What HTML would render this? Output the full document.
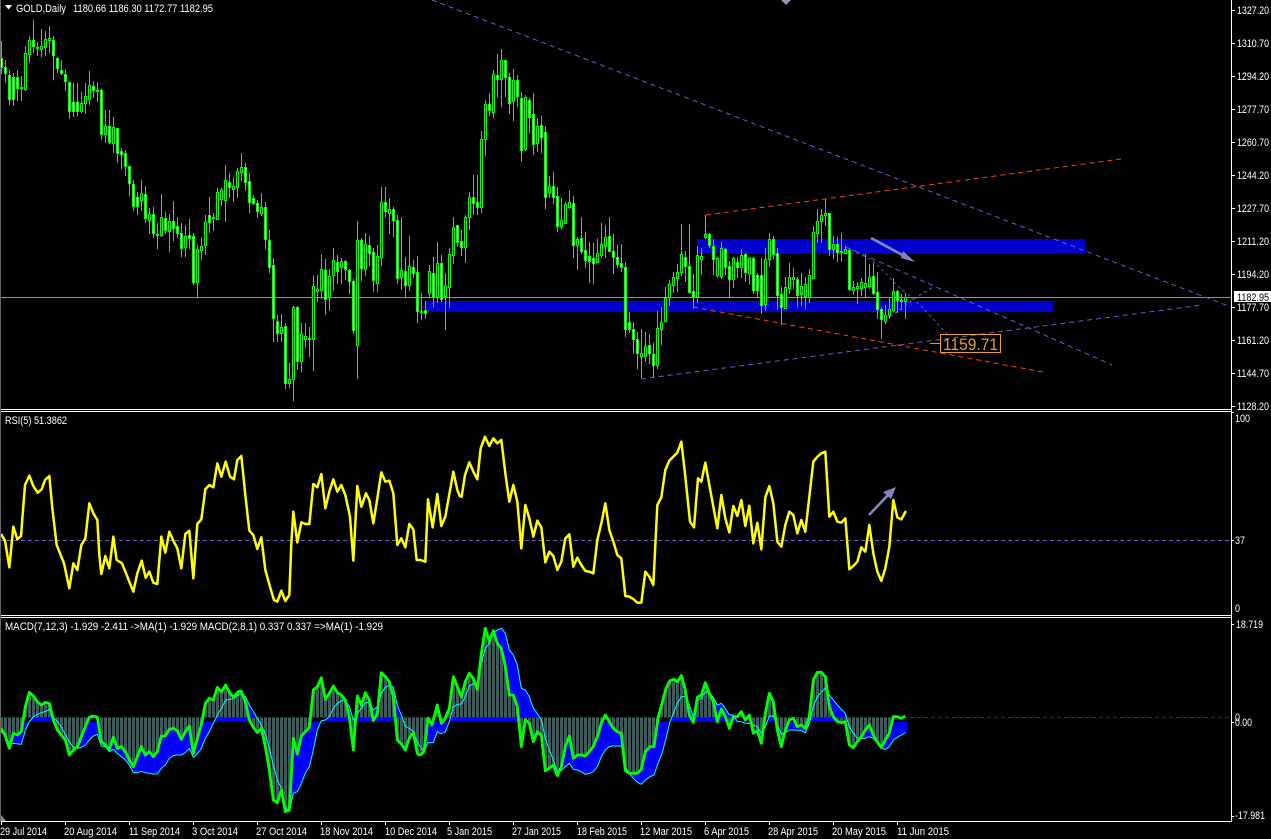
<!DOCTYPE html>
<html><head><meta charset="utf-8"><title>GOLD,Daily</title>
<style>
html,body{margin:0;padding:0;background:#000;width:1271px;height:839px;overflow:hidden}
svg{display:block}
text{font-family:"Liberation Sans",sans-serif;font-size:11px;fill:#fff}
</style></head><body>
<svg width="1271" height="839" viewBox="0 0 1271 839" xmlns="http://www.w3.org/2000/svg">
<defs>
<pattern id="bars" patternUnits="userSpaceOnUse" x="0" y="0" width="12" height="30">
<rect width="12" height="30" fill="#000"/><rect x="0" width="9" height="30" fill="#3c5a5a"/>
</pattern>
</defs>
<rect width="1271" height="839" fill="#000"/>

<!-- main chart -->
<rect x="697" y="239" width="388" height="15" fill="#0000cd"/>
<rect x="426" y="301" width="627" height="11" fill="#0000cd"/>
<rect x="0" y="297" width="1231" height="1" fill="#8e9494"/>

<g shape-rendering="crispEdges">
<path fill="none" stroke="#00ff00" d="M1.5 41V74M5.5 60V83M9.5 70V105M13.5 73V106M17.5 70V101M21.5 76V101M25.5 46V91M29.5 36V63M33.5 20V53M37.5 42V56M41.5 29V57M45.5 31V56M49.5 26V53M53.5 36V80M57.5 57V73M61.5 60V75M65.5 69V91M69.5 82V119M73.5 83V117M77.5 83V116M81.5 92V113M85.5 83V114M89.5 71V105M93.5 81V98M97.5 82V102M101.5 89V140M105.5 110V143M109.5 110V144M113.5 117V153M117.5 128V163M121.5 148V169M125.5 150V176M129.5 166V196M133.5 180V211M137.5 192V215M141.5 180V211M145.5 186V223M149.5 208V234M153.5 207V238M157.5 223V249M161.5 194V237M165.5 212V234M169.5 214V252M173.5 201V241M177.5 217V238M181.5 223V257M185.5 225V257M189.5 219V249M193.5 233V285M197.5 245V298M201.5 237V260M205.5 215V255M209.5 197V233M213.5 213V231M217.5 188V220M221.5 188V206M225.5 165V222M229.5 173V198M233.5 177V202M237.5 168V198M241.5 153V181M245.5 163V191M249.5 173V213M253.5 195V205M257.5 200V218M261.5 193V216M265.5 202V249M269.5 230V273M273.5 258V342M277.5 315V342M281.5 314V342M285.5 323V389M289.5 363V388M293.5 306V401M297.5 306V370M301.5 323V372M305.5 323V348M309.5 327V357M313.5 276V371M317.5 275V302M321.5 254V299M325.5 259V315M329.5 269V311M333.5 248V291M337.5 255V284M341.5 258V284M345.5 260V280M349.5 269V294M353.5 279V334M357.5 221V379M361.5 238V281M365.5 233V276M369.5 236V266M373.5 248V292M377.5 245V292M381.5 187V266M385.5 187V217M389.5 198V234M393.5 207V237M397.5 215V284M401.5 217V290M405.5 257V298M409.5 236V291M413.5 260V278M417.5 256V323M421.5 293V320M425.5 301V319M429.5 265V298M433.5 257V307M437.5 242V303M441.5 255V302M445.5 273V330M449.5 248V308M453.5 217V264M457.5 225V247M461.5 230V256M465.5 215V263M469.5 192V230M473.5 175V215M477.5 175V215M481.5 131V213M485.5 100V156M489.5 93V116M493.5 70V118M497.5 54V97M501.5 49V107M505.5 60V97M509.5 73V114M513.5 69V121M517.5 75V107M521.5 92V162M525.5 95V151M529.5 98V133M533.5 93V155M537.5 118V152M541.5 116V153M545.5 126V209M549.5 176V198M553.5 172V204M557.5 187V232M561.5 198V229M565.5 202V224M569.5 190V209M573.5 196V258M577.5 237V270M581.5 217V254M585.5 232V268M589.5 242V283M593.5 243V284M597.5 239V263M601.5 223V258M605.5 225V258M609.5 217V252M613.5 234V274M617.5 245V268M621.5 244V272M625.5 262V337M629.5 312V333M633.5 322V354M637.5 332V369M641.5 329V378M645.5 332V362M649.5 334V364M653.5 343V378M657.5 311V369M661.5 307V345M665.5 287V322M669.5 280V306M673.5 272V293M677.5 264V292M681.5 224V276M685.5 251V282M689.5 224V293M693.5 274V309M697.5 246V303M701.5 248V275M705.5 215V239M709.5 233V248M713.5 239V275M717.5 257V278M721.5 242V279M725.5 248V275M729.5 261V297M733.5 257V288M737.5 257V278M741.5 249V278M745.5 253V282M749.5 257V284M753.5 257V294M757.5 273V298M761.5 258V314M765.5 248V311M769.5 233V267M773.5 236V259M777.5 248V310M781.5 287V325M785.5 277V309M789.5 263V294M793.5 268V289M797.5 277V307M801.5 273V306M805.5 277V309M809.5 269V303M813.5 226V279M817.5 209V243M821.5 209V243M825.5 199V226M829.5 213V256M833.5 236V259M837.5 237V262M841.5 233V262M845.5 246V254M849.5 248V291M853.5 281V295M857.5 282V304M861.5 278V296M865.5 254V297M869.5 264V289M873.5 263V295M877.5 272V319M881.5 307V339M885.5 305V324M889.5 297V319M893.5 278V312M897.5 290V313M901.5 294V310M905.5 293V319"/>
<path fill="#fff" stroke="#00ff00" d="M.5 58.5h2V67.5h-2zM4.5 67.5h2V73.5h-2zM8.5 75.5h2V99.5h-2zM12.5 77.5h2V99.5h-2zM16.5 77.5h2V88.5h-2zM32.5 40.5h2V46.5h-2zM52.5 40.5h2V55.5h-2zM56.5 58.5h2V68.5h-2zM60.5 70.5h2V73.5h-2zM64.5 74.5h2V81.5h-2zM68.5 82.5h2V111.5h-2zM72.5 102.5h2V111.5h-2zM76.5 102.5h2V111.5h-2zM92.5 86.5h2V90.5h-2zM100.5 90.5h2V134.5h-2zM108.5 126.5h2V142.5h-2zM116.5 128.5h2V153.5h-2zM120.5 151.5h2V154.5h-2zM124.5 153.5h2V166.5h-2zM128.5 166.5h2V183.5h-2zM132.5 184.5h2V206.5h-2zM136.5 197.5h2V206.5h-2zM144.5 194.5h2V218.5h-2zM152.5 214.5h2V233.5h-2zM164.5 218.5h2V230.5h-2zM172.5 221.5h2V228.5h-2zM176.5 226.5h2V233.5h-2zM180.5 233.5h2V248.5h-2zM188.5 235.5h2V238.5h-2zM192.5 236.5h2V282.5h-2zM208.5 215.5h2V222.5h-2zM228.5 182.5h2V187.5h-2zM244.5 167.5h2V182.5h-2zM248.5 181.5h2V202.5h-2zM252.5 198.5h2V203.5h-2zM256.5 203.5h2V211.5h-2zM264.5 207.5h2V239.5h-2zM268.5 240.5h2V267.5h-2zM272.5 265.5h2V318.5h-2zM276.5 321.5h2V333.5h-2zM284.5 326.5h2V383.5h-2zM296.5 307.5h2V361.5h-2zM324.5 270.5h2V299.5h-2zM336.5 262.5h2V271.5h-2zM344.5 261.5h2V269.5h-2zM348.5 270.5h2V281.5h-2zM352.5 281.5h2V330.5h-2zM360.5 240.5h2V268.5h-2zM368.5 245.5h2V253.5h-2zM372.5 252.5h2V280.5h-2zM384.5 202.5h2V211.5h-2zM392.5 209.5h2V220.5h-2zM396.5 220.5h2V278.5h-2zM404.5 271.5h2V285.5h-2zM412.5 267.5h2V273.5h-2zM416.5 272.5h2V311.5h-2zM424.5 310.5h2V313.5h-2zM432.5 273.5h2V297.5h-2zM440.5 263.5h2V299.5h-2zM456.5 225.5h2V242.5h-2zM460.5 241.5h2V247.5h-2zM472.5 197.5h2V203.5h-2zM476.5 202.5h2V207.5h-2zM488.5 104.5h2V110.5h-2zM496.5 75.5h2V79.5h-2zM504.5 60.5h2V77.5h-2zM508.5 77.5h2V103.5h-2zM516.5 80.5h2V96.5h-2zM520.5 98.5h2V150.5h-2zM528.5 100.5h2V117.5h-2zM532.5 114.5h2V144.5h-2zM540.5 125.5h2V137.5h-2zM544.5 132.5h2V197.5h-2zM552.5 186.5h2V197.5h-2zM556.5 196.5h2V226.5h-2zM572.5 203.5h2V245.5h-2zM580.5 238.5h2V251.5h-2zM584.5 250.5h2V260.5h-2zM588.5 256.5h2V261.5h-2zM592.5 258.5h2V263.5h-2zM608.5 236.5h2V251.5h-2zM612.5 251.5h2V257.5h-2zM616.5 257.5h2V264.5h-2zM620.5 263.5h2V267.5h-2zM624.5 267.5h2V329.5h-2zM628.5 322.5h2V329.5h-2zM632.5 329.5h2V339.5h-2zM636.5 339.5h2V353.5h-2zM648.5 345.5h2V353.5h-2zM652.5 354.5h2V365.5h-2zM684.5 257.5h2V266.5h-2zM688.5 266.5h2V292.5h-2zM692.5 291.5h2V297.5h-2zM708.5 234.5h2V245.5h-2zM712.5 246.5h2V259.5h-2zM724.5 249.5h2V267.5h-2zM728.5 266.5h2V279.5h-2zM736.5 262.5h2V267.5h-2zM744.5 254.5h2V272.5h-2zM752.5 258.5h2V290.5h-2zM756.5 275.5h2V290.5h-2zM760.5 275.5h2V305.5h-2zM772.5 239.5h2V254.5h-2zM776.5 253.5h2V295.5h-2zM780.5 294.5h2V307.5h-2zM796.5 279.5h2V295.5h-2zM828.5 213.5h2V249.5h-2zM836.5 244.5h2V252.5h-2zM848.5 250.5h2V289.5h-2zM872.5 276.5h2V293.5h-2zM876.5 292.5h2V309.5h-2zM880.5 309.5h2V319.5h-2zM896.5 291.5h2V300.5h-2z"/>
<path fill="#000" stroke="#00ff00" d="M20.5 87.5h2V88.5h-2zM24.5 53.5h2V89.5h-2zM28.5 40.5h2V54.5h-2zM36.5 47.5h2V48.5h-2zM40.5 46.5h2V49.5h-2zM44.5 39.5h2V47.5h-2zM48.5 38.5h2V40.5h-2zM80.5 103.5h2V111.5h-2zM84.5 96.5h2V103.5h-2zM88.5 85.5h2V99.5h-2zM96.5 90.5h2V91.5h-2zM104.5 126.5h2V134.5h-2zM112.5 127.5h2V143.5h-2zM140.5 193.5h2V200.5h-2zM148.5 214.5h2V220.5h-2zM156.5 234.5h2V235.5h-2zM160.5 217.5h2V235.5h-2zM168.5 221.5h2V231.5h-2zM184.5 236.5h2V247.5h-2zM196.5 249.5h2V282.5h-2zM200.5 246.5h2V250.5h-2zM204.5 222.5h2V245.5h-2zM212.5 217.5h2V218.5h-2zM216.5 192.5h2V219.5h-2zM220.5 190.5h2V199.5h-2zM224.5 180.5h2V200.5h-2zM232.5 186.5h2V189.5h-2zM236.5 171.5h2V187.5h-2zM240.5 167.5h2V172.5h-2zM260.5 207.5h2V213.5h-2zM280.5 327.5h2V333.5h-2zM288.5 379.5h2V383.5h-2zM292.5 307.5h2V379.5h-2zM300.5 334.5h2V361.5h-2zM304.5 336.5h2V339.5h-2zM308.5 338.5h2V339.5h-2zM312.5 286.5h2V339.5h-2zM316.5 289.5h2V291.5h-2zM320.5 269.5h2V290.5h-2zM328.5 276.5h2V297.5h-2zM332.5 260.5h2V275.5h-2zM340.5 261.5h2V267.5h-2zM356.5 240.5h2V345.5h-2zM364.5 244.5h2V269.5h-2zM376.5 256.5h2V283.5h-2zM380.5 202.5h2V257.5h-2zM388.5 209.5h2V213.5h-2zM400.5 270.5h2V277.5h-2zM408.5 266.5h2V285.5h-2zM420.5 311.5h2V312.5h-2zM428.5 271.5h2V293.5h-2zM436.5 263.5h2V297.5h-2zM444.5 286.5h2V296.5h-2zM448.5 254.5h2V287.5h-2zM452.5 227.5h2V255.5h-2zM464.5 217.5h2V247.5h-2zM468.5 197.5h2V217.5h-2zM480.5 139.5h2V207.5h-2zM484.5 104.5h2V139.5h-2zM492.5 74.5h2V112.5h-2zM500.5 60.5h2V79.5h-2zM512.5 80.5h2V101.5h-2zM524.5 97.5h2V149.5h-2zM536.5 126.5h2V143.5h-2zM548.5 186.5h2V192.5h-2zM560.5 220.5h2V226.5h-2zM564.5 204.5h2V223.5h-2zM568.5 202.5h2V207.5h-2zM576.5 239.5h2V245.5h-2zM596.5 253.5h2V262.5h-2zM600.5 244.5h2V255.5h-2zM604.5 237.5h2V246.5h-2zM640.5 353.5h2V356.5h-2zM644.5 346.5h2V356.5h-2zM656.5 328.5h2V365.5h-2zM660.5 322.5h2V329.5h-2zM664.5 298.5h2V321.5h-2zM668.5 284.5h2V297.5h-2zM672.5 277.5h2V285.5h-2zM676.5 272.5h2V278.5h-2zM680.5 254.5h2V272.5h-2zM696.5 255.5h2V297.5h-2zM700.5 256.5h2V259.5h-2zM704.5 234.5h2V237.5h-2zM716.5 258.5h2V275.5h-2zM720.5 248.5h2V276.5h-2zM732.5 258.5h2V279.5h-2zM740.5 255.5h2V267.5h-2zM748.5 258.5h2V273.5h-2zM764.5 259.5h2V304.5h-2zM768.5 239.5h2V259.5h-2zM784.5 287.5h2V308.5h-2zM788.5 277.5h2V288.5h-2zM792.5 277.5h2V279.5h-2zM800.5 286.5h2V294.5h-2zM804.5 284.5h2V296.5h-2zM808.5 275.5h2V297.5h-2zM812.5 232.5h2V278.5h-2zM816.5 221.5h2V233.5h-2zM820.5 215.5h2V221.5h-2zM824.5 213.5h2V215.5h-2zM832.5 244.5h2V249.5h-2zM840.5 251.5h2V252.5h-2zM844.5 249.5h2V253.5h-2zM852.5 287.5h2V290.5h-2zM856.5 286.5h2V288.5h-2zM860.5 282.5h2V288.5h-2zM864.5 283.5h2V287.5h-2zM868.5 277.5h2V286.5h-2zM884.5 315.5h2V321.5h-2zM888.5 309.5h2V315.5h-2zM892.5 291.5h2V310.5h-2zM900.5 300.5h2V301.5h-2zM904.5 297.5h2V301.5h-2z"/>
</g>

<!-- trendlines -->
<g fill="none" stroke-width="1" stroke-dasharray="5 4">
<path stroke="#6a5acd" d="M432 0L1231 307"/>
<path stroke="#6a5acd" d="M641 379L1202 305"/>
<path stroke="#6a5acd" d="M846 247L1112 365"/>
<path stroke="#ff4500" d="M706 215L1121 159"/>
<path stroke="#ff4500" d="M693 307L1043 372"/>
<path stroke="#5a5a9a" stroke-dasharray="3 3" d="M846 247L873 261L900 288L920 305L948 335"/>
<path stroke="#6a6a8a" stroke-dasharray="3 3" d="M890 317L920 295L933 287"/>
</g>

<!-- arrows -->
<g fill="none" stroke="#8484c4" stroke-width="2.6"><path d="M871 238L908 258"/><path d="M869 515L889 494"/></g>
<path fill="#8484c4" d="M915 262L903 251L901 258Z"/>
<path fill="#8484c4" d="M896 487L883 492L891 499Z"/>

<!-- target label -->
<path stroke="#e8a020" d="M930 343.5H940"/>
<rect x="940.5" y="334.5" width="60" height="18" fill="none" stroke="#e8a020"/>
<text x="943" y="350" textLength="55" lengthAdjust="spacingAndGlyphs" style="font-size:17px;fill:#e8a020">1159.71</text>

<!-- RSI -->
<path d="M0 540.5H1231" stroke="#6a5acd" stroke-dasharray="4 3"/>
<g transform="translate(0,410) scale(.33333)" fill="none" stroke="#ffff00" stroke-width="7.5" stroke-linejoin="round">
<polyline points="3,372 15,392 28,472 40,350 52,388 63,378 75,225 88,197 100,228 113,248 125,238 135,210 148,198 157,295 170,405 192,460 208,535 220,460 232,480 244,405 256,385 268,280 280,310 292,330 298,435 304,492 316,438 328,475 340,380 350,450 366,460 378,490 400,545 412,490 425,452 437,503 448,485 460,518 472,522 484,380 496,428 508,365 520,392 532,415 544,475 556,372 568,362 580,505 592,342 604,328 616,238 628,225 640,232 652,160 664,200 677,155 690,200 702,208 712,150 724,138 736,255 748,362 760,375 772,417 784,382 796,480 810,530 822,570 832,575 844,542 856,573 868,555 874,400 880,305 892,397 904,337 916,342 928,342 940,222 952,232 964,192 976,295 988,245 1000,208 1012,245 1024,225 1036,255 1050,320 1060,452 1072,228 1084,290 1098,250 1108,270 1120,340 1132,265 1144,187 1156,215 1168,212 1180,250 1192,405 1204,385 1216,412 1228,342 1240,358 1250,450 1262,450 1276,455 1284,268 1298,352 1312,252 1324,348 1336,320 1360,185 1372,240 1380,260"/>
</g>
<g transform="translate(460,410) scale(.33333)" fill="none" stroke="#ffff00" stroke-width="7.5" stroke-linejoin="round">
<polyline points="-1,258 5,260 15,195 28,157 40,185 52,208 62,115 75,80 88,108 100,85 112,100 124,90 136,190 148,275 160,225 172,275 184,415 196,285 208,325 220,380 232,332 244,352 256,457 268,425 280,438 292,480 304,455 316,385 328,373 340,470 352,443 364,465 376,483 388,485 400,490 412,390 424,340 436,280 448,360 460,395 472,435 484,445 496,558 508,560 520,567 532,578 544,578 556,485 568,500 580,525 592,285 604,262 616,180 628,152 640,140 652,128 664,95 676,200 690,335 702,352 714,205 724,215 736,158 748,225 760,290 772,355 784,255 796,325 808,367 820,288 832,318 844,270 856,348 868,287 880,400 892,338 904,418 916,262 928,228 940,280 952,395 964,410 976,345 988,305 1000,315 1012,370 1024,330 1036,365 1048,260 1060,155 1072,140 1084,130 1096,125 1108,320 1120,305 1132,335 1144,338 1156,325 1168,478 1180,468 1192,455 1204,412 1216,425 1228,345 1240,430 1252,485 1264,513 1276,475 1288,410 1300,270 1312,322 1324,328 1338,303"/>
</g>

<!-- MACD -->
<g transform="translate(0,610) scale(.33333)">
<polygon fill="#0000ff" points="0,335 3,365 15,378 28,402 40,400 64,403 76,360 88,335 100,320 112,313 124,308 136,305 148,298 160,320 172,335 184,350 196,375 208,395 220,412 232,415 244,412 256,405 268,390 280,378 292,373 304,408 316,410 328,425 340,418 352,430 364,440 376,450 388,465 400,488 412,488 424,484 436,488 448,490 460,492 472,492 484,475 496,465 508,445 520,437 532,435 544,435 556,428 568,415 580,442 592,432 604,415 616,385 628,365 640,340 652,315 664,295 677,270 690,268 702,266 714,255 724,250 736,260 748,285 760,305 772,325 784,345 796,372 808,415 820,465 832,510 844,535 856,590 868,605 880,550 892,545 904,520 916,490 928,470 940,420 952,360 964,332 976,330 988,320 1000,295 1012,280 1024,272 1036,272 1048,290 1060,330 1072,310 1084,295 1096,278 1108,278 1120,300 1132,290 1144,250 1156,232 1168,225 1180,232 1192,285 1204,315 1216,350 1228,355 1240,365 1252,395 1260,410 1260,335"/>
<polygon fill="url(#bars)" points="0,322 3,355 15,375 28,415 40,370 52,375 64,365 76,290 88,247 100,258 112,275 124,285 136,277 148,280 160,330 172,360 184,375 196,390 208,435 220,420 232,410 244,380 256,350 268,322 280,318 292,322 304,395 316,405 328,418 340,382 352,415 364,410 376,425 388,450 400,470 412,440 424,410 436,435 448,425 460,440 472,425 484,378 496,378 508,358 520,355 532,362 544,388 556,365 568,348 580,430 592,385 604,345 616,280 628,265 640,270 652,232 664,245 677,225 690,250 702,262 714,245 724,243 736,275 748,330 760,352 772,368 784,355 796,410 808,480 820,570 832,578 844,540 856,605 868,600 880,385 892,432 904,378 916,365 928,352 940,240 952,230 964,203 976,268 988,250 1000,228 1012,248 1024,255 1036,270 1048,320 1060,420 1072,258 1084,285 1096,248 1108,270 1120,332 1132,310 1144,188 1156,200 1168,215 1180,260 1192,390 1204,402 1216,420 1228,385 1240,367 1252,430 1260,437 1260,322"/>
</g>
<g transform="translate(420,610) scale(.33333)">
<polygon fill="#0000ff" points="0,335 0,410 12,425 24,398 40,398 52,365 64,372 76,365 88,335 100,290 112,283 124,282 136,260 148,228 160,222 172,220 184,160 196,115 208,100 220,70 232,60 244,55 256,70 268,120 280,135 292,165 304,235 316,240 328,260 340,295 352,310 364,330 376,385 388,420 400,450 412,485 424,482 436,470 448,460 460,478 472,480 484,485 496,493 508,490 520,485 532,470 544,440 556,420 568,410 580,408 604,408 616,470 628,490 640,505 652,517 664,523 676,510 690,500 702,495 714,460 726,430 738,385 750,335 762,305 772,280 784,260 796,260 808,285 820,320 832,270 844,265 856,245 868,248 880,262 892,285 904,280 916,295 928,315 940,315 952,335 964,335 976,340 988,340 1000,345 1012,350 1024,370 1036,350 1048,318 1060,318 1072,345 1084,372 1096,368 1108,360 1120,360 1132,360 1144,362 1156,368 1168,340 1180,290 1192,260 1204,245 1216,235 1228,255 1240,270 1252,285 1264,298 1276,310 1288,350 1300,370 1312,385 1324,385 1336,385 1348,380 1360,385 1372,400 1384,415 1396,418 1408,410 1420,390 1432,382 1444,375 1462,368 1462,335"/>
<polygon fill="url(#bars)" points="0,322 0,437 12,425 24,325 36,345 52,285 64,340 76,325 88,295 100,200 112,230 124,260 136,215 148,190 160,205 172,238 184,130 196,55 208,95 220,62 232,100 244,115 256,170 268,255 280,255 292,290 304,410 316,330 328,340 340,395 352,365 364,375 376,483 388,475 400,465 412,497 424,470 436,410 448,378 460,445 472,435 484,435 496,438 508,425 520,410 532,380 544,340 556,315 568,335 580,355 592,365 604,370 616,482 628,490 640,490 652,490 664,478 676,425 690,410 702,410 714,325 726,280 738,235 750,212 762,208 772,215 784,197 796,240 808,315 820,337 832,262 844,255 856,218 868,250 880,275 892,335 904,297 916,320 928,355 940,320 952,320 964,305 976,330 988,315 1000,370 1012,362 1024,400 1036,310 1048,250 1060,275 1072,360 1084,410 1096,360 1108,330 1120,325 1132,350 1144,345 1156,355 1168,320 1180,210 1192,187 1204,187 1216,200 1228,290 1240,320 1252,335 1264,338 1276,335 1288,405 1300,413 1312,395 1324,380 1336,360 1348,345 1360,375 1372,397 1384,412 1396,390 1408,370 1420,320 1432,320 1444,325 1456,318 1456,322"/>
</g>
<path d="M0 717.5H1231" stroke="#800080" stroke-dasharray="4 3"/>
<g transform="translate(0,610) scale(.33333)" fill="none" stroke-linejoin="round">
<polyline stroke="#00ffff" stroke-width="3" points="3,365 15,378 28,402 40,400 64,403 76,360 88,335 100,320 112,313 124,308 136,305 148,298 160,320 172,335 184,350 196,375 208,395 220,412 232,415 244,412 256,405 268,390 280,378 292,373 304,408 316,410 328,425 340,418 352,430 364,440 376,450 388,465 400,488 412,488 424,484 436,488 448,490 460,492 472,492 484,475 496,465 508,445 520,437 532,435 544,435 556,428 568,415 580,442 592,432 604,415 616,385 628,365 640,340 652,315 664,295 677,270 690,268 702,266 714,255 724,250 736,260 748,285 760,305 772,325 784,345 796,372 808,415 820,465 832,510 844,535 856,590 868,605 880,550 892,545 904,520 916,490 928,470 940,420 952,360 964,332 976,330 988,320 1000,295 1012,280 1024,272 1036,272 1048,290 1060,330 1072,310 1084,295 1096,278 1108,278 1120,300 1132,290 1144,250 1156,232 1168,225 1180,232 1192,285 1204,315 1216,350 1228,355 1240,365 1252,395 1260,410"/>
<polyline stroke="#00ff00" stroke-width="8.5" points="3,355 15,375 28,415 40,370 52,375 64,365 76,290 88,247 100,258 112,275 124,285 136,277 148,280 160,330 172,360 184,375 196,390 208,435 220,420 232,410 244,380 256,350 268,322 280,318 292,322 304,395 316,405 328,418 340,382 352,415 364,410 376,425 388,450 400,470 412,440 424,410 436,435 448,425 460,440 472,425 484,378 496,378 508,358 520,355 532,362 544,388 556,365 568,348 580,430 592,385 604,345 616,280 628,265 640,270 652,232 664,245 677,225 690,250 702,262 714,245 724,243 736,275 748,330 760,352 772,368 784,355 796,410 808,480 820,570 832,578 844,540 856,605 868,600 880,385 892,432 904,378 916,365 928,352 940,240 952,230 964,203 976,268 988,250 1000,228 1012,248 1024,255 1036,270 1048,320 1060,420 1072,258 1084,285 1096,248 1108,270 1120,332 1132,310 1144,188 1156,200 1168,215 1180,260 1192,390 1204,402 1216,420 1228,385 1240,367 1252,430 1260,437"/>
</g>
<g transform="translate(420,610) scale(.33333)" fill="none" stroke-linejoin="round">
<polyline stroke="#00ffff" stroke-width="3" points="0,410 12,425 24,398 40,398 52,365 64,372 76,365 88,335 100,290 112,283 124,282 136,260 148,228 160,222 172,220 184,160 196,115 208,100 220,70 232,60 244,55 256,70 268,120 280,135 292,165 304,235 316,240 328,260 340,295 352,310 364,330 376,385 388,420 400,450 412,485 424,482 436,470 448,460 460,478 472,480 484,485 496,493 508,490 520,485 532,470 544,440 556,420 568,410 580,408 604,408 616,470 628,490 640,505 652,517 664,523 676,510 690,500 702,495 714,460 726,430 738,385 750,335 762,305 772,280 784,260 796,260 808,285 820,320 832,270 844,265 856,245 868,248 880,262 892,285 904,280 916,295 928,315 940,315 952,335 964,335 976,340 988,340 1000,345 1012,350 1024,370 1036,350 1048,318 1060,318 1072,345 1084,372 1096,368 1108,360 1120,360 1132,360 1144,362 1156,368 1168,340 1180,290 1192,260 1204,245 1216,235 1228,255 1240,270 1252,285 1264,298 1276,310 1288,350 1300,370 1312,385 1324,385 1336,385 1348,380 1360,385 1372,400 1384,415 1396,418 1408,410 1420,390 1432,382 1444,375 1456,368"/>
<polyline stroke="#00ff00" stroke-width="8.5" points="0,437 12,425 24,325 36,345 52,285 64,340 76,325 88,295 100,200 112,230 124,260 136,215 148,190 160,205 172,238 184,130 196,55 208,95 220,62 232,100 244,115 256,170 268,255 280,255 292,290 304,410 316,330 328,340 340,395 352,365 364,375 376,483 388,475 400,465 412,497 424,470 436,410 448,378 460,445 472,435 484,435 496,438 508,425 520,410 532,380 544,340 556,315 568,335 580,355 592,365 604,370 616,482 628,490 640,490 652,490 664,478 676,425 690,410 702,410 714,325 726,280 738,235 750,212 762,208 772,215 784,197 796,240 808,315 820,337 832,262 844,255 856,218 868,250 880,275 892,335 904,297 916,320 928,355 940,320 952,320 964,305 976,330 988,315 1000,370 1012,362 1024,400 1036,310 1048,250 1060,275 1072,360 1084,410 1096,360 1108,330 1120,325 1132,350 1144,345 1156,355 1168,320 1180,210 1192,187 1204,187 1216,200 1228,290 1240,320 1252,335 1264,338 1276,335 1288,405 1300,413 1312,395 1324,380 1336,360 1348,345 1360,375 1372,397 1384,412 1396,390 1408,370 1420,320 1432,320 1444,325 1456,318"/>
</g>

<!-- frames -->
<g shape-rendering="crispEdges" fill="#fff">
<rect x="1231" y="0" width="1" height="822"/>
<rect x="0" y="409" width="1232" height="1"/>
<rect x="0" y="411" width="1232" height="1"/>
<rect x="0" y="615" width="1232" height="1"/>
<rect x="0" y="617" width="1232" height="1"/>
<rect x="0" y="821" width="1232" height="1"/>
<rect x="0" y="0" width="1" height="822" fill="#666"/>
</g>
<path stroke="#fff" fill="none" shape-rendering="crispEdges" d="M1232 10.5h3M1232 43.5h3M1232 76.5h3M1232 109.5h3M1232 142.5h3M1232 175.5h3M1232 208.5h3M1232 241.5h3M1232 274.5h3M1232 307.5h3M1232 340.5h3M1232 373.5h3M1232 406.5h3M1232 412.5h2M1232 540.5h2M1232 624.5h2M1232 722.5h2M1232 816.5h2M1.5 822v3M65.5 822v3M129.5 822v3M193.5 822v3M257.5 822v3M321.5 822v3M385.5 822v3M449.5 822v3M513.5 822v3M577.5 822v3M641.5 822v3M705.5 822v3M769.5 822v3M833.5 822v3M897.5 822v3"/>

<!-- decorations -->
<path fill="#fff" d="M5 5H12L8.5 9.5Z"/>
<path fill="#8a9aaa" d="M781 0H791L786 5Z"/>
<path fill="#8a9090" d="M1 815L6 821H1Z"/>

<!-- title text -->
<text x="16" y="12" textLength="50" lengthAdjust="spacingAndGlyphs">GOLD,Daily</text>
<text x="73" y="12" textLength="140" lengthAdjust="spacingAndGlyphs">1180.66 1186.30 1172.77 1182.95</text>
<text x="5" y="424" textLength="62" lengthAdjust="spacingAndGlyphs">RSI(5) 51.3862</text>
<text x="5" y="630" textLength="378" lengthAdjust="spacingAndGlyphs">MACD(7,12,3) -1.929 -2.411  -&gt;MA(1) -1.929  MACD(2,8,1) 0.337 0.337  =&gt;MA(1) -1.929</text>

<!-- price axis -->
<g>
<text x="1237" y="14" textLength="32" lengthAdjust="spacingAndGlyphs">1327.20</text>
<text x="1237" y="47" textLength="32" lengthAdjust="spacingAndGlyphs">1310.70</text>
<text x="1237" y="80" textLength="32" lengthAdjust="spacingAndGlyphs">1294.20</text>
<text x="1237" y="113" textLength="32" lengthAdjust="spacingAndGlyphs">1277.70</text>
<text x="1237" y="146" textLength="32" lengthAdjust="spacingAndGlyphs">1260.70</text>
<text x="1237" y="179" textLength="32" lengthAdjust="spacingAndGlyphs">1244.20</text>
<text x="1237" y="212" textLength="32" lengthAdjust="spacingAndGlyphs">1227.70</text>
<text x="1237" y="245" textLength="32" lengthAdjust="spacingAndGlyphs">1211.20</text>
<text x="1237" y="278" textLength="32" lengthAdjust="spacingAndGlyphs">1194.20</text>
<text x="1237" y="311" textLength="32" lengthAdjust="spacingAndGlyphs">1177.70</text>
<text x="1237" y="344" textLength="32" lengthAdjust="spacingAndGlyphs">1161.20</text>
<text x="1237" y="377" textLength="32" lengthAdjust="spacingAndGlyphs">1144.70</text>
<text x="1237" y="410" textLength="32" lengthAdjust="spacingAndGlyphs">1128.20</text>
<rect x="1234" y="291" width="37" height="11" fill="#fff"/>
<text x="1237" y="301" textLength="32" lengthAdjust="spacingAndGlyphs" style="fill:#000">1182.95</text>
<text x="1235" y="422" textLength="15" lengthAdjust="spacingAndGlyphs">100</text>
<text x="1235" y="544" textLength="10" lengthAdjust="spacingAndGlyphs">37</text>
<text x="1235" y="612" textLength="5" lengthAdjust="spacingAndGlyphs">0</text>
<text x="1236" y="628" textLength="27" lengthAdjust="spacingAndGlyphs">18.719</text>
<text x="1235" y="721" textLength="5" lengthAdjust="spacingAndGlyphs">0</text>
<text x="1235" y="726" textLength="17" lengthAdjust="spacingAndGlyphs">0.00</text>
<text x="1235" y="819" textLength="30" lengthAdjust="spacingAndGlyphs">-17.981</text>
</g>

<!-- time axis -->
<g>
<text x="0" y="835" textLength="47" lengthAdjust="spacingAndGlyphs">29 Jul 2014</text>
<text x="64" y="835" textLength="53" lengthAdjust="spacingAndGlyphs">20 Aug 2014</text>
<text x="129" y="835" textLength="51" lengthAdjust="spacingAndGlyphs">11 Sep 2014</text>
<text x="192" y="835" textLength="46" lengthAdjust="spacingAndGlyphs">3 Oct 2014</text>
<text x="256" y="835" textLength="51" lengthAdjust="spacingAndGlyphs">27 Oct 2014</text>
<text x="320" y="835" textLength="53" lengthAdjust="spacingAndGlyphs">18 Nov 2014</text>
<text x="385" y="835" textLength="52" lengthAdjust="spacingAndGlyphs">10 Dec 2014</text>
<text x="447" y="835" textLength="45" lengthAdjust="spacingAndGlyphs">5 Jan 2015</text>
<text x="512" y="835" textLength="49" lengthAdjust="spacingAndGlyphs">27 Jan 2015</text>
<text x="577" y="835" textLength="50" lengthAdjust="spacingAndGlyphs">18 Feb 2015</text>
<text x="640" y="835" textLength="52" lengthAdjust="spacingAndGlyphs">12 Mar 2015</text>
<text x="704" y="835" textLength="45" lengthAdjust="spacingAndGlyphs">6 Apr 2015</text>
<text x="768" y="835" textLength="50" lengthAdjust="spacingAndGlyphs">28 Apr 2015</text>
<text x="832" y="835" textLength="54" lengthAdjust="spacingAndGlyphs">20 May 2015</text>
<text x="897" y="835" textLength="52" lengthAdjust="spacingAndGlyphs">11 Jun 2015</text>
</g>
</svg>
</body></html>
